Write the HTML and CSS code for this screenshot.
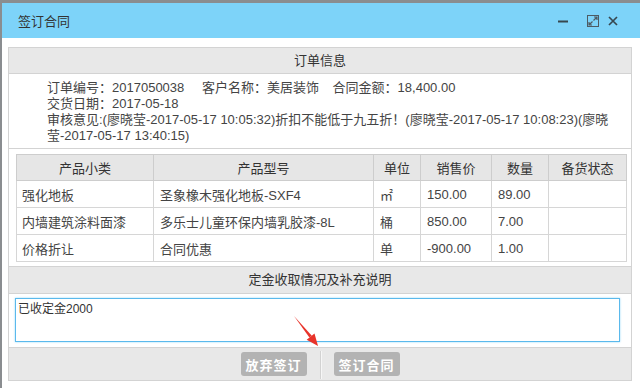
FILE: index.html
```html
<!DOCTYPE html>
<html lang="zh-CN">
<head>
  <meta charset="UTF-8">
  <meta name="viewport" content="width=device-width, initial-scale=1">
  <title>签订合同</title>
  <link rel="stylesheet" href="styles.css">
</head>
<body>
  <div class="window">
    <div class="titlebar">
      <span class="title">签订合同</span>
      <div class="tools">
        <svg class="tool tool-min" width="10" height="12" viewBox="0 0 10 12"><path d="M0 6.5H10" stroke="#37474f" stroke-width="2"/></svg>
        <svg class="tool tool-max" width="12" height="12" viewBox="0 0 12 12">
          <rect x="0.5" y="0.5" width="11" height="11" fill="none" stroke="#4d5b63" stroke-width="1"/>
          <path d="M6.5 5.5L10 2M7 2H10V5M5.5 6.5L2 10M2 7V10H5" fill="none" stroke="#4d5b63" stroke-width="1.2"/>
        </svg>
        <svg class="tool tool-close" width="10" height="10" viewBox="0 0 10 10"><path d="M1 1L9 9M9 1L1 9" stroke="#37474f" stroke-width="1.7"/></svg>
      </div>
    </div>

    <div class="content">
      <div class="panel">
        <!-- 订单信息 -->
        <div class="panel-head">订单信息</div>
        <div class="info">
          <p>
            <span class="field field-no">订单编号：2017050038</span>
            <span class="field field-customer">客户名称：美居装饰</span>
            <span class="field">合同金额：18,400.00</span>
          </p>
          <p>交货日期：2017-05-18</p>
          <p>审核意见:(廖晓莹-2017-05-17 10:05:32)折扣不能低于九五折！(廖晓莹-2017-05-17 10:08:23)(廖晓莹-2017-05-17 13:40:15)</p>
        </div>

        <!-- 产品明细 -->
        <div class="table-wrap">
          <table class="goods">
            <colgroup>
              <col style="width:137px">
              <col style="width:220px">
              <col style="width:47px">
              <col style="width:71px">
              <col style="width:57px">
              <col style="width:78px">
            </colgroup>
            <thead>
              <tr>
                <th>产品小类</th>
                <th>产品型号</th>
                <th>单位</th>
                <th>销售价</th>
                <th>数量</th>
                <th>备货状态</th>
              </tr>
            </thead>
            <tbody>
              <tr>
                <td>强化地板</td>
                <td>圣象橡木强化地板-SXF4</td>
                <td>㎡</td>
                <td>150.00</td>
                <td>89.00</td>
                <td></td>
              </tr>
              <tr>
                <td>内墙建筑涂料面漆</td>
                <td>多乐士儿童环保内墙乳胶漆-8L</td>
                <td>桶</td>
                <td>850.00</td>
                <td>7.00</td>
                <td></td>
              </tr>
              <tr>
                <td>价格折让</td>
                <td>合同优惠</td>
                <td>单</td>
                <td>-900.00</td>
                <td>1.00</td>
                <td></td>
              </tr>
            </tbody>
          </table>
        </div>

        <!-- 定金说明 -->
        <div class="panel-head panel-head-mid">定金收取情况及补充说明</div>
        <div class="note">
          <textarea class="note-input">已收定金2000</textarea>
        </div>

        <div class="footer">
          <button class="btn">放弃签订</button>
          <span class="divider"></span>
          <button class="btn">签订合同</button>
        </div>
      </div>
    </div>
  </div>

  <svg class="arrow" width="34" height="40" viewBox="0 0 34 40">
    <polygon points="4,6 21.8,25.7 19.4,27.5" fill="#e8332a"/>
    <polygon points="28,36 24.5,23.5 16.7,29.7" fill="#e8332a"/>
  </svg>
</body>
</html>
```

FILE: styles.css
```css
* {
  margin: 0;
  padding: 0;
  box-sizing: border-box;
  font-family: "Liberation Sans", "Noto Sans CJK SC", sans-serif;
}
body {
  background: #8a8d90;
  width: 640px;
  height: 388px;
  overflow: hidden;
}
.window {
  margin: 3px 0 0 2px;
  background: #fff;
  height: 385px;
}
.titlebar {
  height: 35px;
  background: #7dd3f9;
  display: flex;
  align-items: center;
  padding: 0 22px 0 16px;
}
.title {
  font-size: 13px;
  color: #333;
}
.tools {
  margin-left: auto;
  display: flex;
  align-items: center;
}
.tool-min {
  margin-right: 19px;
}
.tool-max {
  margin-right: 9px;
}
.content {
  padding: 9px 8px 0 6px;
}
.panel {
  border: 1px solid #d3d3d3;
  width: 624px;
}
.panel-head {
  height: 26px;
  line-height: 25px;
  background: #e8e8e8;
  text-align: center;
  font-size: 13px;
  color: #333;
  border-bottom: 1px solid #d3d3d3;
}
.info {
  padding: 6px 20px 4px 38px;
  height: 75px;
  font-size: 13px;
  line-height: 16px;
  color: #444;
  border-bottom: 1px solid #d3d3d3;
}
.field {
  display: inline-block;
}
.field-no {
  margin-right: 14px;
}
.field-customer {
  margin-right: 10px;
}
.table-wrap {
  padding: 5px 0 4px 7px;
  border-bottom: 1px solid #d3d3d3;
}
.goods {
  width: 611px;
  table-layout: fixed;
  border-collapse: collapse;
  border: 1px solid #cdcdcd;
  font-size: 13px;
  color: #444;
}
.goods th {
  height: 26px;
  background: #e6e6e6;
  font-weight: normal;
  color: #333;
  border: 1px solid #cdcdcd;
  text-align: center;
}
.goods td {
  height: 27px;
  padding: 0 6px;
  border: 1px solid #d6d6d6;
  white-space: nowrap;
}
.goods td:first-child {
  padding-left: 5px;
}
.panel-head-mid {
  height: 27px;
  line-height: 26px;
}
.note {
  padding: 4px 12px 5px 6px;
  border-bottom: 1px solid #d3d3d3;
}
.note-input {
  display: block;
  width: 605px;
  height: 44px;
  border: 1px solid #5ab9ec;
  box-shadow: 0 0 2px #9ad8f7;
  padding: 2px 2px;
  font-size: 12px;
  line-height: 16px;
  color: #333;
  resize: none;
  outline: none;
}
.footer {
  height: 32px;
  background: #e8e8e8;
  display: flex;
  align-items: center;
  justify-content: center;
}
.btn {
  width: 66px;
  height: 24px;
  background: #b3b3b3;
  color: #fff;
  border: none;
  border-radius: 3px;
  font-size: 13px;
  font-weight: bold;
  letter-spacing: 1px;
  cursor: pointer;
}
.divider {
  width: 2px;
  height: 28px;
  margin: 2px 12px 0 13px;
  border-left: 1px solid #d2d2d2;
  border-right: 1px solid #f6f6f6;
}
.arrow {
  position: absolute;
  left: 290px;
  top: 310px;
}
```
